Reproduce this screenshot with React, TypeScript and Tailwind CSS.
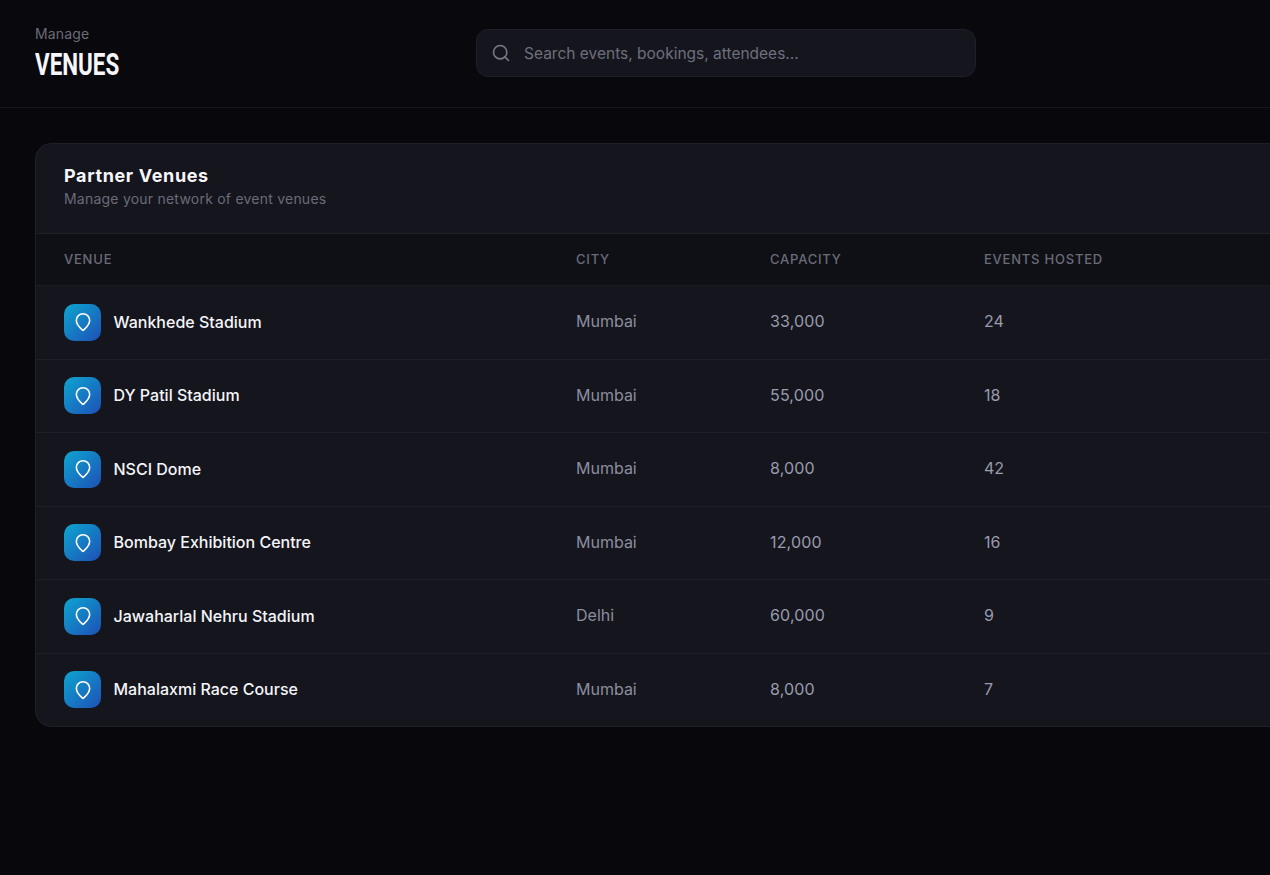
import { Search } from "lucide-react";

const venues = [
  ["Wankhede Stadium", "Mumbai", "33,000", "24"],
  ["DY Patil Stadium", "Mumbai", "55,000", "18"],
  ["NSCI Dome", "Mumbai", "8,000", "42"],
  ["Bombay Exhibition Centre", "Mumbai", "12,000", "16"],
  ["Jawaharlal Nehru Stadium", "Delhi", "60,000", "9"],
  ["Mahalaxmi Race Course", "Mumbai", "8,000", "7"],
];

function Pin() {
  return (
    <svg width="20" height="20" viewBox="0 0 24 24" fill="none" stroke="#ffffff" strokeWidth="1.9" strokeLinecap="round" strokeLinejoin="round">
      <path d="M20 10c0 4.993-5.539 10.193-7.399 11.799a1 1 0 0 1-1.202 0C9.539 20.193 4 14.993 4 10a8 8 0 0 1 16 0" />
    </svg>
  );
}

export default function App() {
  return (
    <div className="h-[875px] w-full overflow-hidden bg-[#07070c] font-['Inter',sans-serif]">
      <header className="flex h-[108px] border-b border-[#16161d] bg-[#08080d] pl-[35px]">
        <div className="w-[441px] pt-[25px]">
          <div className="text-[14px] leading-[18px] tracking-[0.01em] text-[#6b6b78]">Manage</div>
          <div className="mt-[2px] origin-left scale-x-[0.70] font-['Roboto',sans-serif] text-[32px] font-bold leading-[38px] whitespace-nowrap text-[#f5f5fa]">VENUES</div>
        </div>
        <div className="mt-[29px] flex h-[48px] w-[500px] items-center gap-[13px] rounded-[12px] border border-[#1f1f29] bg-[#14151d] pl-[14px]">
          <Search size={20} strokeWidth={1.9} className="text-[#7a7a87]" />
          <span className="pt-[1px] text-[15.5px] text-[#6f6f7c]">Search events, bookings, attendees...</span>
        </div>
      </header>
      <main className="pl-[35px] pt-[35px]">
        <div className="w-[1500px] overflow-hidden rounded-[16px] border border-[#1f1f29] bg-[#14151d]">
          <div className="h-[90px] border-b border-[#1f1f29] pl-[28px] pt-[20px]">
            <div className="text-[18px] font-bold leading-[24px] tracking-[0.035em] text-[#f7f7fb]">Partner Venues</div>
            <div className="mt-[1px] text-[14px] leading-[20px] tracking-[0.016em] text-[#6b6b78]">Manage your network of event venues</div>
          </div>
          <div className="grid h-[52.15px] grid-cols-[512px_194px_214px_1fr] items-center border-b border-[#1b1b24] bg-[#0f1016] pl-[28px] text-[13px] font-medium tracking-[0.06em] text-[#6b6b78]">
            <div>VENUE</div>
            <div>CITY</div>
            <div>CAPACITY</div>
            <div>EVENTS HOSTED</div>
          </div>
          {venues.map((v, i) => (
            <div key={v[0]} className={`grid grid-cols-[512px_194px_214px_1fr] items-center pl-[28px] ${i < 5 ? "h-[73.5px] border-b border-[#1f1f29]" : "h-[72.5px]"}`}>
              <div className="flex items-center gap-[12.5px]">
                <div className="flex h-[37px] w-[37px] items-center justify-center rounded-[10px] bg-gradient-to-br from-[#0ea5d0] to-[#1e4fb5]">
                  <Pin />
                </div>
                <span className="pb-[1px] text-[16px] font-medium text-[#f5f5fa]">{v[0]}</span>
              </div>
              <div className="pb-[2px] text-[16px] text-[#8c8d9f]">{v[1]}</div>
              <div className="pb-[2px] text-[16px] tracking-[0.01em] text-[#9a9bad]">{v[2]}</div>
              <div className="pb-[2px] text-[16px] text-[#9a9bad]">{v[3]}</div>
            </div>
          ))}
        </div>
      </main>
    </div>
  );
}
